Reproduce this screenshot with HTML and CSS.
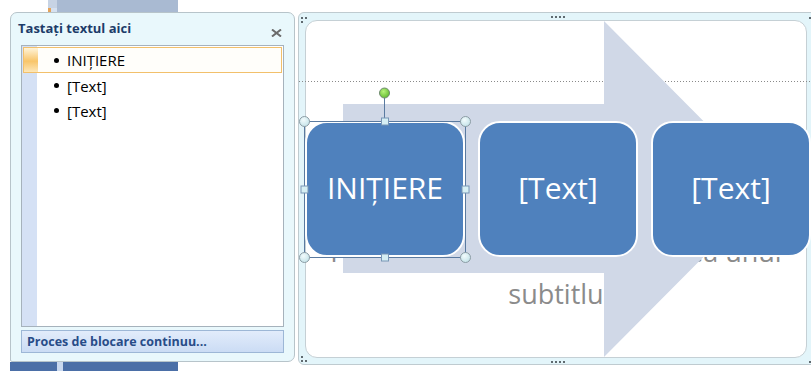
FILE: index.html
```html
<!DOCTYPE html>
<html lang="ro">
<head>
  <meta charset="UTF-8" />
  <title>SmartArt - Proces de blocare continuu</title>
  <link rel="stylesheet" href="styles.css">
</head>
<body>
  <div class="strip-top"></div>

  <div class="workspace">
    <aside class="text-pane">
      <header class="pane-head">
        <span class="pane-title">Tastați textul aici</span>
        <svg class="pane-close" width="11" height="8" viewBox="0 0 11 8">
          <path d="M1 0.5 L10 7.5 M10 0.5 L1 7.5" stroke="#6b6b6b" stroke-width="2" fill="none"/>
        </svg>
      </header>

      <ul class="outline">
        <li class="outline-row is-current"><span class="dot"></span>INIȚIERE</li>
        <li class="outline-row"><span class="dot"></span>[Text]</li>
        <li class="outline-row"><span class="dot"></span>[Text]</li>
      </ul>

      <div class="layout-name">Proces de blocare continuu...</div>
    </aside>

    <section class="art-frame">
      <div class="slide">
        <p class="subtitle">Faceți clic pentru reformatarea unui<br>subtitlu</p>
      </div>

      <svg class="arrow-layer" width="513" height="351" viewBox="0 0 513 351">
        <line x1="0" y1="68.5" x2="513" y2="68.5" stroke="#8a8a8a" stroke-width="1" stroke-dasharray="1 2"/>
        <polygon points="44,91 305,91 305,8 472,176 305,344 305,260 44,260" fill="#d0d8e7"/>
      </svg>

      <div class="steps">
        <div class="step">INIȚIERE</div>
        <div class="step">[Text]</div>
        <div class="step">[Text]</div>
      </div>

      <svg class="handles" width="513" height="351" viewBox="0 0 513 351">
        <defs>
          <radialGradient id="knob" cx="0.4" cy="0.35" r="0.7">
            <stop offset="0" stop-color="#f2fbfc"/>
            <stop offset="1" stop-color="#c2e2e8"/>
          </radialGradient>
          <radialGradient id="spin" cx="0.4" cy="0.35" r="0.7">
            <stop offset="0" stop-color="#b6f27a"/>
            <stop offset="1" stop-color="#5fb82e"/>
          </radialGradient>
        </defs>

        <!-- drag grips on the frame -->
        <g fill="#5f6a70">
          <rect x="2" y="4" width="2" height="2"/><rect x="6" y="4" width="2" height="2"/><rect x="2" y="8" width="2" height="2"/>
          <rect x="252" y="3" width="2" height="2"/><rect x="256" y="3" width="2" height="2"/><rect x="260" y="3" width="2" height="2"/><rect x="264" y="3" width="2" height="2"/>
          <rect x="510" y="4" width="2" height="2"/>
          <rect x="2" y="343" width="2" height="2"/><rect x="2" y="347" width="2" height="2"/><rect x="6" y="347" width="2" height="2"/>
          <rect x="252" y="348" width="2" height="2"/><rect x="256" y="348" width="2" height="2"/><rect x="260" y="348" width="2" height="2"/><rect x="264" y="348" width="2" height="2"/>
          <rect x="510" y="348" width="2" height="2"/>
        </g>

        <!-- selection of the first step -->
        <rect x="5.5" y="108.5" width="161" height="136" fill="none" stroke="#5a7aa0" stroke-width="1"/>
        <line x1="85.5" y1="85" x2="85.5" y2="108" stroke="#5a7aa0" stroke-width="1"/>
        <circle cx="85.5" cy="80" r="5" fill="url(#spin)" stroke="#6f8a70" stroke-width="1"/>

        <g fill="url(#knob)" stroke="#8c9ca4" stroke-width="1">
          <circle cx="5.5" cy="108.5" r="5"/>
          <circle cx="166.5" cy="108.5" r="5"/>
          <circle cx="5.5" cy="244.5" r="5"/>
          <circle cx="166.5" cy="244.5" r="5"/>
        </g>
        <g fill="#d6eff4" stroke="#7896b6" stroke-width="1">
          <rect x="82.5" y="105" width="7" height="7"/>
          <rect x="82.5" y="241" width="7" height="7"/>
          <rect x="2" y="173" width="7" height="7"/>
          <rect x="163" y="173" width="7" height="7"/>
        </g>
      </svg>
    </section>
  </div>

  <div class="strip-bottom"></div>
</body>
</html>
```

FILE: styles.css
```css
* {
  box-sizing: border-box;
}

body {
  margin: 0;
  width: 811px;
  height: 371px;
  overflow: hidden;
  background: #ffffff;
  font-family: "Open Sans", sans-serif;
}

.strip-top {
  margin-left: 48px;
  width: 130px;
  height: 12px;
  background:
    linear-gradient(to right, #e3a35a 0 3px, #d6e1f0 3px 9px, transparent 9px) 0 8px / 100% 4px no-repeat,
    linear-gradient(to right, #c7d3e4 0 9px, #a9bad2 9px);
}

.strip-bottom {
  margin-left: 10px;
  width: 168px;
  height: 9px;
  background: linear-gradient(to right, #4b6fa7 0 47px, #c8d8ef 47px 53px, #4b6fa7 53px);
}

.workspace {
  display: flex;
  align-items: flex-start;
  gap: 3px;
  height: 350px;
  padding-left: 10px;
}

/* text pane */
.text-pane {
  display: flex;
  flex-direction: column;
  flex: none;
  width: 285px;
  height: 350px;
  padding: 0 10px 8px;
  border: 1px solid #b7c4ca;
  border-radius: 7px 7px 7px 2px;
  background: #e9f8fc;
}

.pane-head {
  display: flex;
  align-items: center;
  justify-content: space-between;
  height: 32px;
  margin: 0 -3px;
  padding-right: 5px;
}

.pane-title {
  margin-bottom: 2px;
  font-size: 13px;
  font-weight: 700;
  color: #1d3c69;
}

.pane-close {
  margin-top: 7px;
}

.outline {
  flex: 1;
  margin: 0;
  padding: 1px;
  list-style: none;
  border: 1px solid #a6b2bc;
  background: linear-gradient(to right, #d5e1f5 0 15px, #ffffff 15px);
}

.outline-row {
  display: flex;
  align-items: center;
  height: 25px;
  padding-left: 31px;
  font-size: 15px;
  color: #000000;
}

.outline-row.is-current {
  height: 26px;
  padding-left: 30px;
  border: 1px solid #f2c06b;
  background: linear-gradient(#fff4d9, #f8c56a 55%, #fde7b8) 0 0 / 14px 100% no-repeat, #fffefa;
}

.dot {
  width: 5px;
  height: 5px;
  margin-right: 8px;
  border-radius: 50%;
  background: #000000;
}

.layout-name {
  display: flex;
  align-items: center;
  height: 23px;
  margin-top: 3px;
  padding-left: 5px;
  border: 1px solid #9db7d6;
  background: linear-gradient(#e2ecfb, #cbdcf4);
  font-size: 12.5px;
  font-weight: 700;
  color: #284c88;
}

/* smartart frame */
.art-frame {
  position: relative;
  flex: none;
  width: 516px;
  height: 353px;
  border: 1px solid #bfcbd0;
  border-radius: 6px 0 0 6px;
  background: #e3f5fa;
}

.slide {
  position: absolute;
  left: 6px;
  top: 7px;
  width: 502px;
  height: 338px;
  overflow: hidden;
  border: 1px solid #c5d0d5;
  border-radius: 12px;
  background: #ffffff;
}

.subtitle {
  position: absolute;
  left: 0;
  right: 0;
  top: 210px;
  margin: 0;
  text-align: center;
  font-size: 27px;
  line-height: 42px;
  color: #8b8b8b;
  white-space: nowrap;
}

.arrow-layer,
.handles {
  position: absolute;
  left: 0;
  top: 0;
}

.steps {
  position: absolute;
  left: 6px;
  top: 108px;
  display: flex;
  gap: 13px;
}

.step {
  display: flex;
  align-items: center;
  justify-content: center;
  width: 160px;
  height: 136px;
  padding-bottom: 4px;
  border: 2px solid #ffffff;
  border-radius: 22px;
  background: #4f81bd;
  font-size: 30px;
  color: #ffffff;
}
```
